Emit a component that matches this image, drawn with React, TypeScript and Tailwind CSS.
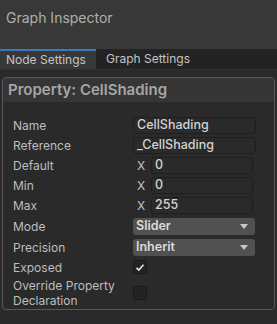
import React from "react";

const font = { fontFamily: "Inter, 'Noto Sans', sans-serif" };

function Label({ children }: { children: React.ReactNode }) {
  return <div className="w-[120px] text-[12px] leading-[15px] text-[#bebebe]">{children}</div>;
}

function TextField({ value }: { value: string }) {
  return (
    <div className="flex h-[17px] w-[123px] items-center rounded-[3px] border border-[#1f1f1f] bg-[#2a2a2a] px-[3px] text-[12.5px] font-medium text-[#d2d2d2]">
      {value}
    </div>
  );
}

function NumField({ value }: { value: string }) {
  return (
    <div className="flex w-[123px] items-center">
      <span className="ml-[4px] w-[14px] text-[12px] text-[#c2c2c2]">X</span>
      <div className="flex h-[17px] w-[102px] items-center rounded-[3px] border border-[#1f1f1f] bg-[#2a2a2a] px-[3px] text-[12.5px] font-medium text-[#d2d2d2]">
        {value}
      </div>
    </div>
  );
}

function Dropdown({ value }: { value: string }) {
  return (
    <div className="flex h-[17px] w-[122px] items-center justify-between rounded-[3px] bg-[#515151] pl-[3px] pr-[7px] text-[12.5px] font-semibold text-[#dcdcdc]">
      <span>{value}</span>
      <svg width="8" height="5" viewBox="0 0 8 5">
        <path d="M0 0 H8 L4 5 Z" fill="#c8c8c8" />
      </svg>
    </div>
  );
}

function Checkbox({ checked }: { checked?: boolean }) {
  return (
    <div className="flex h-[14px] w-[14px] items-center justify-center rounded-[2px] border border-[#1a1a1a] bg-[#232323]">
      {checked && (
        <svg width="10" height="9" viewBox="0 0 10 9">
          <path d="M1.5 4.8 L3.8 7 L8.5 1.8" stroke="#e8e8e8" strokeWidth="1.6" fill="none" />
        </svg>
      )}
    </div>
  );
}

function Row({ label, children, h = "h-[17px]" }: { label: React.ReactNode; children: React.ReactNode; h?: string }) {
  return (
    <div className={`flex ${h} items-center`}>
      <Label>{label}</Label>
      {children}
    </div>
  );
}

export default function App() {
  return (
    <div className="flex h-[324px] w-[277px] flex-col overflow-hidden bg-[#2a2a2a]" style={font}>
      <div className="h-[49px] bg-[#383838] px-[6px] pt-[7px] text-[14px] text-[#b0b0b0]">Graph Inspector</div>
      <div className="flex h-[20px] bg-[#232323]">
        <div className="flex w-[96px] flex-col bg-[#383838]">
          <div className="h-[2px] bg-[#3a79bb]" />
          <div className="flex flex-1 items-center pl-[6px] text-[12px] text-[#c4c4c4]">Node Settings</div>
        </div>
        <div className="flex items-center pl-[10px] text-[12px] text-[#c4c4c4]">Graph Settings</div>
      </div>
      <div className="h-px bg-[#303030]" />
      <div className="mx-[2px] mt-[7px] flex h-[233px] flex-col rounded-[4px] border border-[#595959]">
        <div className="flex h-[24px] items-center rounded-t-[3px] bg-[#353535] pl-[5px] text-[15px] font-semibold text-[#a6a6a6]">
          Property: CellShading
        </div>
        <div className="mt-[15px] flex flex-col gap-[3px] pl-[10px]">
          <Row label="Name"><TextField value="CellShading" /></Row>
          <Row label="Reference"><TextField value="_CellShading" /></Row>
          <Row label="Default"><NumField value="0" /></Row>
          <Row label="Min"><NumField value="0" /></Row>
          <Row label="Max"><NumField value="255" /></Row>
          <div className="mt-[1px]"><Row label="Mode"><Dropdown value="Slider" /></Row></div>
          <div className="mt-[1px]"><Row label="Precision"><Dropdown value="Inherit" /></Row></div>
          <Row label="Exposed" h="h-[16px]"><Checkbox checked /></Row>
          <div className="-mt-[1px]"><Row label={<>Override Property<br />Declaration</>} h="h-[32px]"><Checkbox /></Row></div>
        </div>
      </div>
    </div>
  );
}
